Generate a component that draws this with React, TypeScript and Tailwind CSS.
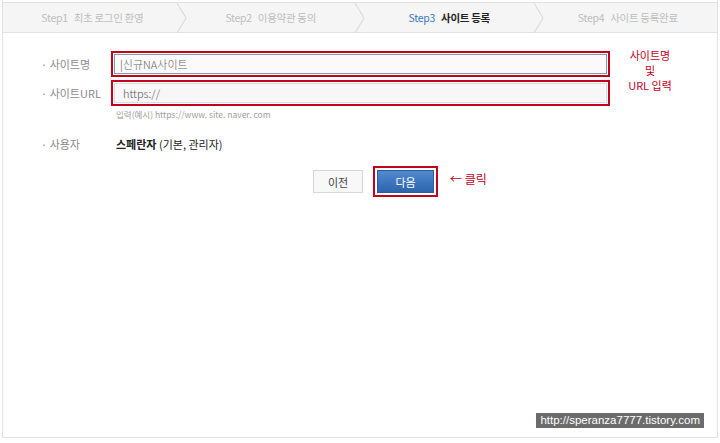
import React from "react";

const font = { fontFamily: '"Noto Sans CJK KR", "Noto Sans", sans-serif' };

function Chevron() {
  return (
    <svg width="14" height="30" viewBox="0 0 14 30" className="absolute right-[-7px] top-0 z-10">
      <polyline points="2,0 11,15 2,30" fill="none" stroke="#dcdcdc" strokeWidth="1.2" />
    </svg>
  );
}

function Step({ n, label, active, last }: { n: number; label: string; active?: boolean; last?: boolean }) {
  return (
    <div className="relative flex h-full w-[180px] items-center justify-center text-[10.5px] tracking-[-0.3px]">
      <span className={active ? "text-[#3b78bd]" : "text-[#bdbdbd]"}>Step{n}</span>
      <span className={"ml-[6px] " + (active ? "font-bold text-[#222]" : "text-[#bdbdbd]")}>{label}</span>
      {!last && <Chevron />}
    </div>
  );
}

export default function App() {
  return (
    <div className="h-[443px] w-[720px] bg-white" style={font}>
      <div className="ml-[2px] h-[438px] w-[716px] border-x border-b border-[#e2e2e2] pt-[2px]">
        <div className="flex h-[31px] border-y border-[#e3e3e3] bg-[#f5f5f5]">
          <Step n={1} label="최초 로그인 환영" />
          <Step n={2} label="이용약관 동의" />
          <Step n={3} label="사이트 등록" active />
          <Step n={4} label="사이트 등록완료" last />
        </div>

        <div className="relative flex pt-[18px]">
          <div className="flex flex-col">
            <div className="flex items-center">
              <div className="w-[108px] pl-[38px] text-[11px] text-[#8a8a8a]">· 사이트명</div>
              <div className="border-2 border-[#c4001a] p-px">
                <div className="flex h-[20px] w-[493px] items-center border border-[#7f9db9] bg-[#fafafa] pl-[5px] text-[11px] font-light text-[#666]">
                  <span className="text-[#333]">|</span>신규NA사이트
                </div>
              </div>
            </div>
            <div className="mt-[3px] flex items-center">
              <div className="w-[108px] pl-[38px] text-[11px] text-[#8a8a8a]">· 사이트URL</div>
              <div className="border-2 border-[#c4001a] p-px">
                <div className="flex h-[20px] w-[493px] items-center border border-[#dcdcdc] bg-[#f7f7f7] pl-[8px] text-[11px] font-light text-[#555]">
                  https://
                </div>
              </div>
            </div>
            <div className="ml-[113px] mt-[2px] text-[8.5px] text-[#a0a0a0]">입력(예시) https://www. site. naver. com</div>
            <div className="mt-[15px] flex items-center">
              <div className="w-[113px] pl-[38px] text-[11px] text-[#8a8a8a]">· 사용자</div>
              <div className="text-[11px] text-[#222]">
                <span className="font-bold">스페란자</span> (기본, 관리자)
              </div>
            </div>
            <div className="mt-[14px] flex items-center pl-[310px]">
              <div className="flex h-[23px] w-[50px] items-center justify-center border border-[#d6d6d6] bg-[#f8f8f8] text-[11px] text-[#444]">
                이전
              </div>
              <div className="ml-[10px] border-2 border-[#c4001a] p-[2px]">
                <div className="flex h-[23px] w-[57px] items-center justify-center border border-[#2c5d9a] bg-gradient-to-b from-[#4f8ad0] to-[#2d64ac] text-[11px] text-white">
                  다음
                </div>
              </div>
              <div className="ml-[12px] mt-[-6px] text-[12px] text-[#c4001a]">
                ← 클릭
              </div>
            </div>
          </div>
          <div className="ml-[14px] mt-[-3px] flex w-[52px] flex-col items-center text-[11px] leading-[15px] text-[#c4001a]">
            <span>사이트명</span>
            <span>및</span>
            <span className="whitespace-nowrap">URL 입력</span>
          </div>
        </div>

        <div className="mt-[216px] flex justify-end pr-[13px]">
          <div className="bg-[#6b6b6b] px-[4px] text-[11.5px] leading-[15px] text-white" style={{ fontFamily: '"Liberation Sans", sans-serif' }}>
            http://speranza7777.tistory.com
          </div>
        </div>
      </div>
    </div>
  );
}
